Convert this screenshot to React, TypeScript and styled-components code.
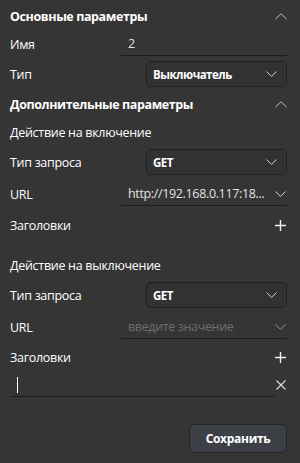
import styled, { createGlobalStyle } from 'styled-components';

const Global = createGlobalStyle`
  html, body {
    margin: 0;
    padding: 0;
    background: #353535;
  }
  body {
    font-family: "Open Sans", "Noto Sans", sans-serif;
    color: #ffffff;
  }
`;

const ChevronUp = () => (
  <svg width="12" height="7" viewBox="0 0 12 7" fill="none">
    <polyline points="0.5,6 6,0.8 11.5,6" stroke="#bdbdbd" strokeWidth="1" />
  </svg>
);

const ChevronDown = ({ color = '#d0d0d0' }: { color?: string }) => (
  <svg width="11" height="6" viewBox="0 0 11 6" fill="none" style={{ flexShrink: 0 }}>
    <polyline points="0.5,0.5 5.5,5.3 10.5,0.5" stroke={color} strokeWidth="1" />
  </svg>
);

const Plus = () => (
  <svg width="11" height="11" viewBox="0 0 11 11" fill="none">
    <path d="M5.5 0v11M0 5.5h11" stroke="#f0f0f0" strokeWidth="1.4" />
  </svg>
);

const Cross = () => (
  <svg width="10" height="10" viewBox="0 0 10 10" fill="none">
    <path d="M0.5 0.5l9 9M9.5 0.5l-9 9" stroke="#d8d8d8" strokeWidth="1.2" />
  </svg>
);

const Panel = styled.div`
  width: 300px;
  height: 463px;
  box-sizing: border-box;
  padding: 2px 13px 0 10px;
  display: flex;
  flex-direction: column;
  font-size: 12.5px;
`;

const SectionHeader = styled.div`
  height: 28px;
  display: flex;
  align-items: center;
  justify-content: space-between;
  font-weight: 700;
  font-size: 12.5px;
  letter-spacing: -0.4px;
`;

const SubTitle = styled.div<{ $gap?: number }>`
  height: 28px;
  margin-top: ${(p) => p.$gap ?? 0}px;
  display: flex;
  align-items: center;
  letter-spacing: -0.3px;
`;

const Row = styled.div<{ $h: number }>`
  height: ${(p) => p.$h}px;
  display: flex;
  align-items: center;
  justify-content: space-between;
`;

const Label = styled.span`
  letter-spacing: -0.3px;
`;

const Select = styled.div`
  width: 141px;
  height: 26px;
  box-sizing: border-box;
  border: 1px solid #1f1f1f;
  border-radius: 5px;
  background: #323232;
  padding: 0 9px 0 6px;
  display: flex;
  align-items: center;
  justify-content: space-between;
  font-weight: 700;
  font-size: 11.5px;
  letter-spacing: -0.5px;
`;

const LineInput = styled.div<{ $w: number; $muted?: boolean }>`
  width: ${(p) => p.$w}px;
  height: 24px;
  box-sizing: border-box;
  border-bottom: 1px solid #1c1c1c;
  padding: 0 1px 0 7px;
  display: flex;
  align-items: center;
  justify-content: space-between;
  gap: 4px;
  color: ${(p) => (p.$muted ? '#6e6e6e' : '#e2e2e2')};
  font-size: 12.5px;
  letter-spacing: -0.35px;
  white-space: nowrap;
`;

const Caret = styled.span`
  width: 1px;
  height: 16px;
  background: #ffffff;
`;

const IconSlot = styled.span`
  display: flex;
  align-items: center;
  padding-right: 1px;
`;

const Footer = styled.div`
  margin-top: 25px;
  display: flex;
  justify-content: flex-end;
`;

const SaveButton = styled.button`
  width: 98px;
  height: 29px;
  border: 1px solid #252525;
  border-radius: 5px;
  background: #3d3f46;
  color: #ffffff;
  font-family: inherit;
  font-weight: 700;
  font-size: 12px;
  letter-spacing: -0.3px;
`;

const ActionBlock = ({
  title,
  url,
  gap,
  headersH,
}: {
  title: string;
  url?: string;
  gap?: number;
  headersH: number;
}) => (
  <>
    <SubTitle $gap={gap}>{title}</SubTitle>
    <Row $h={32}>
      <Label>Тип запроса</Label>
      <Select>
        GET
        <ChevronDown />
      </Select>
    </Row>
    <Row $h={32}>
      <Label>URL</Label>
      <LineInput $w={166} $muted={!url}>
        {url ?? 'введите значение'}
        <ChevronDown color={url ? '#d0d0d0' : '#9a9a9a'} />
      </LineInput>
    </Row>
    <Row $h={headersH}>
      <Label>Заголовки</Label>
      <IconSlot>
        <Plus />
      </IconSlot>
    </Row>
  </>
);

export default function App() {
  return (
    <>
      <Global />
      <Panel>
        <SectionHeader>
          Основные параметры
          <ChevronUp />
        </SectionHeader>
        <Row $h={28}>
          <Label>Имя</Label>
          <LineInput $w={166}>2</LineInput>
        </Row>
        <Row $h={32}>
          <Label>Тип</Label>
          <Select>
            Выключатель
            <ChevronDown />
          </Select>
        </Row>
        <SectionHeader>
          Дополнительные параметры
          <ChevronUp />
        </SectionHeader>
        <ActionBlock title="Действие на включение" url="http://192.168.0.117:18..." headersH={30} />
        <ActionBlock title="Действие на выключение" gap={11} headersH={28} />
        <Row $h={28}>
          <LineInput $w={265}>
            <Caret />
          </LineInput>
          <IconSlot>
            <Cross />
          </IconSlot>
        </Row>
        <Footer>
          <SaveButton>Сохранить</SaveButton>
        </Footer>
      </Panel>
    </>
  );
}
